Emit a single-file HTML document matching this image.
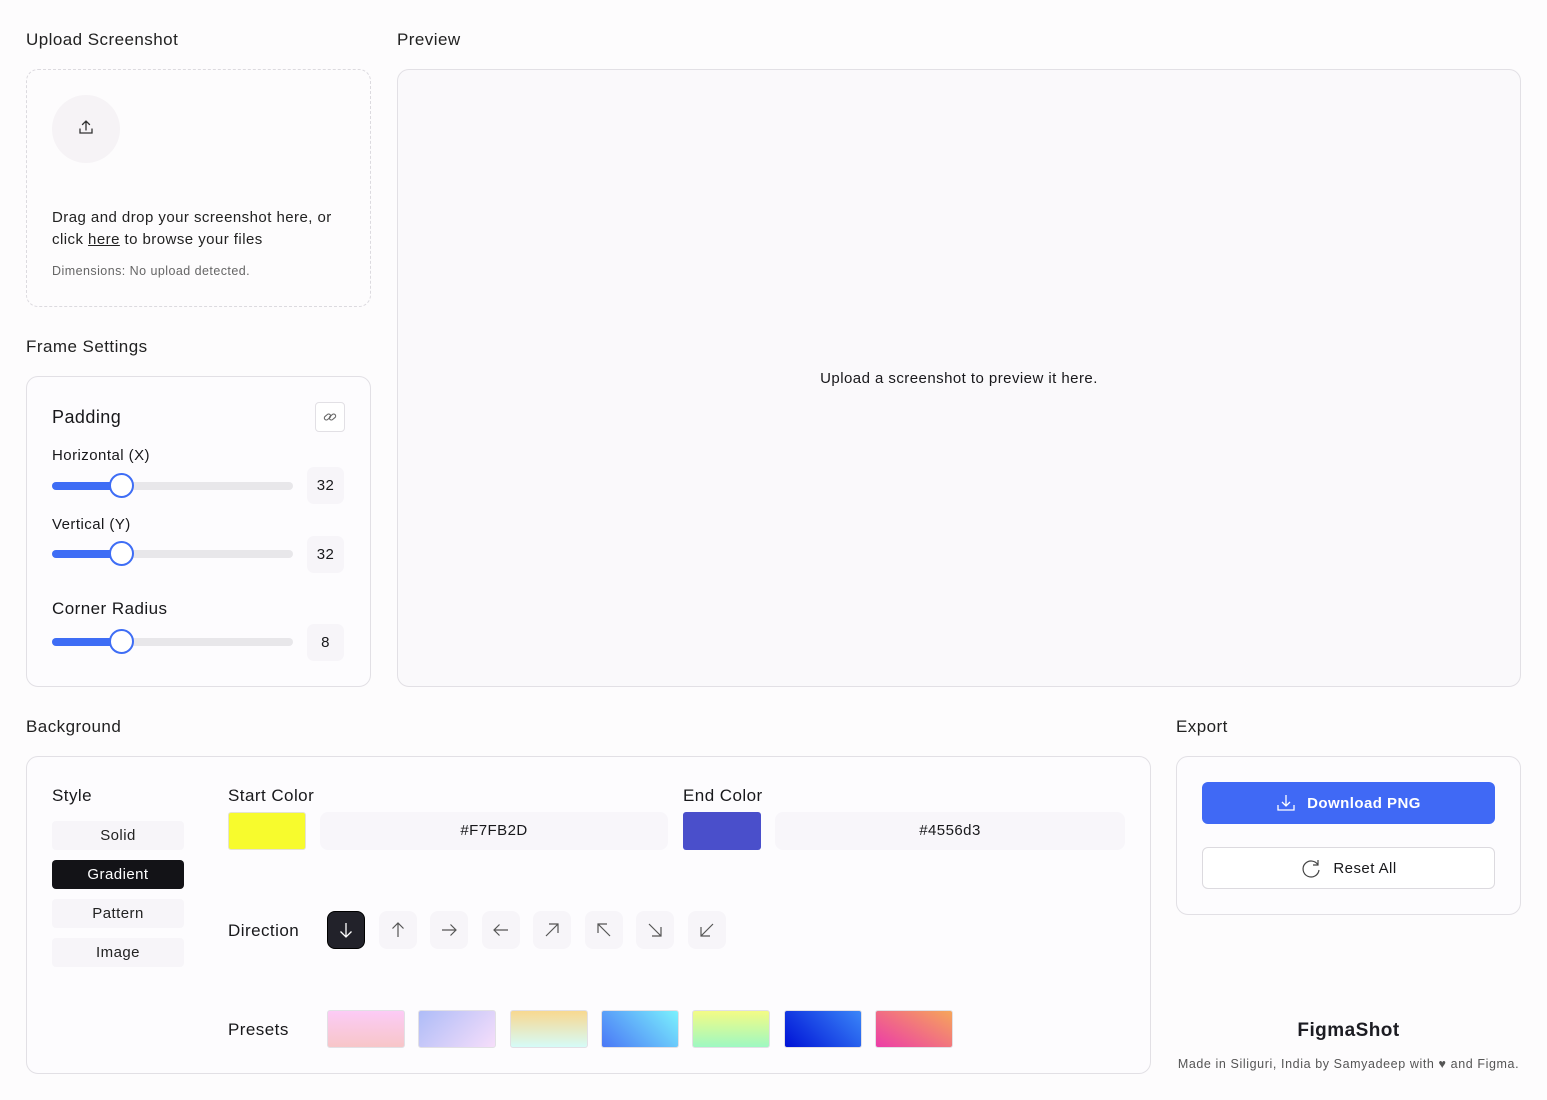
<!DOCTYPE html>
<html><head><meta charset="utf-8"><style>
*{box-sizing:border-box;margin:0;padding:0}
body{width:1547px;height:1100px;background:#fdfcfd;font-family:"Liberation Sans",sans-serif;color:#18181b;position:relative;overflow:hidden;letter-spacing:0.45px}
.a{position:absolute}
.h{font-size:17px;color:#222;top:1px}
.card{position:absolute;border:1px solid #e2e0e5;border-radius:12px;background:#fdfcfe}
.track{position:absolute;height:8px;border-radius:4px;background:#e8e7ea;left:52px;width:241px}
.fill{position:absolute;height:8px;border-radius:4px;background:#3e6df5;left:0;width:70px}
.knob{position:absolute;width:25px;height:25px;border-radius:50%;background:#fff;border:2px solid #3e6df5;left:57px;top:-9px}
.num{position:absolute;width:37px;height:37px;border-radius:7px;background:#f7f5f9;left:307px;font-size:15px;text-align:center;line-height:37px}
.st{position:absolute;left:52px;width:132px;height:29px;border-radius:4px;background:#f7f5f9;font-size:15px;text-align:center;line-height:29px;color:#222}
.dir{position:absolute;top:911px;width:38px;height:38px;border-radius:8px;background:#f7f5f9;display:flex;align-items:center;justify-content:center}
.pr{position:absolute;top:1010px;width:78px;height:38px;border-radius:3px;border:1px solid #e2e0e5}
</style></head><body>
<div class="a h" style="left:26px;top:30px">Upload Screenshot</div>
<div class="a h" style="left:397px;top:30px">Preview</div>
<div class="a" style="left:26px;top:69px;width:345px;height:238px;border:1.5px dashed #dcdadf;border-radius:12px"></div>
<div class="a" style="left:52px;top:95px;width:68px;height:68px;border-radius:50%;background:#f6f3f6"></div>
<svg class="a" style="left:77px;top:119px" width="18" height="18" viewBox="0 0 18 18" fill="none" stroke="#333" stroke-width="1.3" stroke-linecap="round"><path d="M9 2v9M5.5 5.5L9 2l3.5 3.5M3 10v4h12v-4"/></svg>
<div class="a" style="left:52px;top:207px;font-size:15px;line-height:22px;color:#222">Drag and drop your screenshot here, or<br>click <u>here</u> to browse your files</div>
<div class="a" style="left:52px;top:264px;font-size:12.5px;color:#666">Dimensions: No upload detected.</div>
<div class="a" style="left:397px;top:69px;width:1124px;height:618px;border:1px solid #e2e0e5;border-radius:12px;background:#faf9fb"></div>
<div class="a" style="left:397px;width:1124px;top:370px;text-align:center;font-size:15px">Upload a screenshot to preview it here.</div>
<div class="a h" style="left:26px;top:337px">Frame Settings</div>
<div class="card" style="left:26px;top:376px;width:345px;height:311px"></div>
<div class="a" style="left:52px;top:407px;font-size:18px">Padding</div>
<div class="a" style="left:315px;top:402px;width:30px;height:30px;border:1px solid #e2e0e5;border-radius:4px;background:#fff"></div>
<svg class="a" style="left:322px;top:409px" width="16" height="16" viewBox="0 0 16 16" fill="none" stroke="#666" stroke-width="1.1"><rect x="2" y="6" width="7" height="4" rx="2" transform="rotate(-40 5.5 8)"/><rect x="7" y="6" width="7" height="4" rx="2" transform="rotate(-40 10.5 8)"/></svg>
<div class="a" style="left:52px;top:447px;font-size:15px">Horizontal (X)</div>
<div class="track" style="top:482px"><div class="fill"></div><div class="knob"></div></div>
<div class="num" style="top:467px">32</div>
<div class="a" style="left:52px;top:516px;font-size:15px">Vertical (Y)</div>
<div class="track" style="top:550px"><div class="fill"></div><div class="knob"></div></div>
<div class="num" style="top:536px">32</div>
<div class="a" style="left:52px;top:599px;font-size:17px">Corner Radius</div>
<div class="track" style="top:638px"><div class="fill"></div><div class="knob"></div></div>
<div class="num" style="top:624px">8</div>

<div class="a h" style="left:26px;top:717px">Background</div>
<div class="a h" style="left:1176px;top:717px">Export</div>
<div class="card" style="left:26px;top:756px;width:1125px;height:318px"></div>
<div class="a" style="left:52px;top:786px;font-size:17px">Style</div>
<div class="st" style="top:821px">Solid</div>
<div class="st" style="top:860px;background:#131317;color:#fff">Gradient</div>
<div class="st" style="top:899px">Pattern</div>
<div class="st" style="top:938px">Image</div>
<div class="a" style="left:228px;top:786px;font-size:17px">Start Color</div>
<div class="a" style="left:228px;top:812px;width:78px;height:38px;background:#f7fb2d;border:1px solid #e5e3d0;border-radius:3px"></div>
<div class="a" style="left:320px;top:812px;width:348px;height:38px;background:#f8f6fa;border-radius:8px;text-align:center;line-height:38px;font-size:15px">#F7FB2D</div>
<div class="a" style="left:683px;top:786px;font-size:17px">End Color</div>
<div class="a" style="left:683px;top:812px;width:78px;height:38px;background:#4a4fcb;border-radius:3px"></div>
<div class="a" style="left:775px;top:812px;width:350px;height:38px;background:#f8f6fa;border-radius:8px;text-align:center;line-height:38px;font-size:15px">#4556d3</div>
<div class="a" style="left:228px;top:921px;font-size:17px">Direction</div>
<div class="dir" style="left:327px;background:#22222a;border:1px solid #000"><svg width="18" height="18" viewBox="0 0 18 18" fill="none" stroke="#fff" stroke-width="1.3"><path d="M9 2v14M3.5 10.5L9 16l5.5-5.5"/></svg></div>
<div class="dir" style="left:379px"><svg width="18" height="18" viewBox="0 0 18 18" fill="none" stroke="#555" stroke-width="1.2"><path d="M9 16V2M3.5 7.5L9 2l5.5 5.5"/></svg></div>
<div class="dir" style="left:430px"><svg width="18" height="18" viewBox="0 0 18 18" fill="none" stroke="#555" stroke-width="1.2"><path d="M2 9h14M10.5 3.5L16 9l-5.5 5.5"/></svg></div>
<div class="dir" style="left:482px"><svg width="18" height="18" viewBox="0 0 18 18" fill="none" stroke="#555" stroke-width="1.2"><path d="M16 9H2M7.5 3.5L2 9l5.5 5.5"/></svg></div>
<div class="dir" style="left:533px"><svg width="18" height="18" viewBox="0 0 18 18" fill="none" stroke="#555" stroke-width="1.2"><path d="M3 15L15 3M6 3h9v9"/></svg></div>
<div class="dir" style="left:585px"><svg width="18" height="18" viewBox="0 0 18 18" fill="none" stroke="#555" stroke-width="1.2"><path d="M15 15L3 3M12 3H3v9"/></svg></div>
<div class="dir" style="left:636px"><svg width="18" height="18" viewBox="0 0 18 18" fill="none" stroke="#555" stroke-width="1.2"><path d="M3 3l12 12M15 6v9H6"/></svg></div>
<div class="dir" style="left:688px"><svg width="18" height="18" viewBox="0 0 18 18" fill="none" stroke="#555" stroke-width="1.2"><path d="M15 3L3 15M3 6v9h9"/></svg></div>
<div class="a" style="left:228px;top:1020px;font-size:17px">Presets</div>
<div class="pr" style="left:327px;background:linear-gradient(#fccbf6,#f7c6c8)"></div>
<div class="pr" style="left:418px;background:linear-gradient(135deg,#aebcf8,#f6defa)"></div>
<div class="pr" style="left:510px;background:linear-gradient(#f8d890,#d6fbf8)"></div>
<div class="pr" style="left:601px;background:linear-gradient(225deg,#7bf1fd,#4a77f6)"></div>
<div class="pr" style="left:692px;background:linear-gradient(#f3fb85,#9ef8c2)"></div>
<div class="pr" style="left:784px;background:linear-gradient(45deg,#0012d6,#3a86f8)"></div>
<div class="pr" style="left:875px;background:linear-gradient(30deg,#ec3ca8,#f6a65a)"></div>

<div class="card" style="left:1176px;top:756px;width:345px;height:159px"></div>
<div class="a" style="left:1202px;top:782px;width:293px;height:42px;background:#4069f5;border-radius:6px;color:#fff;font-weight:bold;font-size:15px;display:flex;align-items:center;justify-content:center;gap:11px"><svg width="20" height="20" viewBox="0 0 20 20" fill="none" stroke="#fff" stroke-width="1.3"><path d="M10 2v11M6 9l4 4 4-4M2 12v5h16v-5"/></svg>Download PNG</div>
<div class="a" style="left:1202px;top:847px;width:293px;height:42px;background:#fff;border:1px solid #dcdadf;border-radius:6px;font-size:15px;display:flex;align-items:center;justify-content:center;gap:11px"><svg width="22" height="22" viewBox="0 0 22 22" fill="none" stroke="#444" stroke-width="1.2"><path d="M18 8A8 8 0 1 0 19 13M18 3v5h-5"/></svg>Reset All</div>
<div class="a" style="left:1176px;width:345px;top:1020px;text-align:center;font-size:19px;font-weight:bold;color:#1c1c22">FigmaShot</div>
<div class="a" style="left:1160px;width:377px;top:1057px;text-align:center;font-size:12.5px;color:#555;letter-spacing:0.6px">Made in Siliguri, India by Samyadeep with ♥ and Figma.</div>
</body></html>
